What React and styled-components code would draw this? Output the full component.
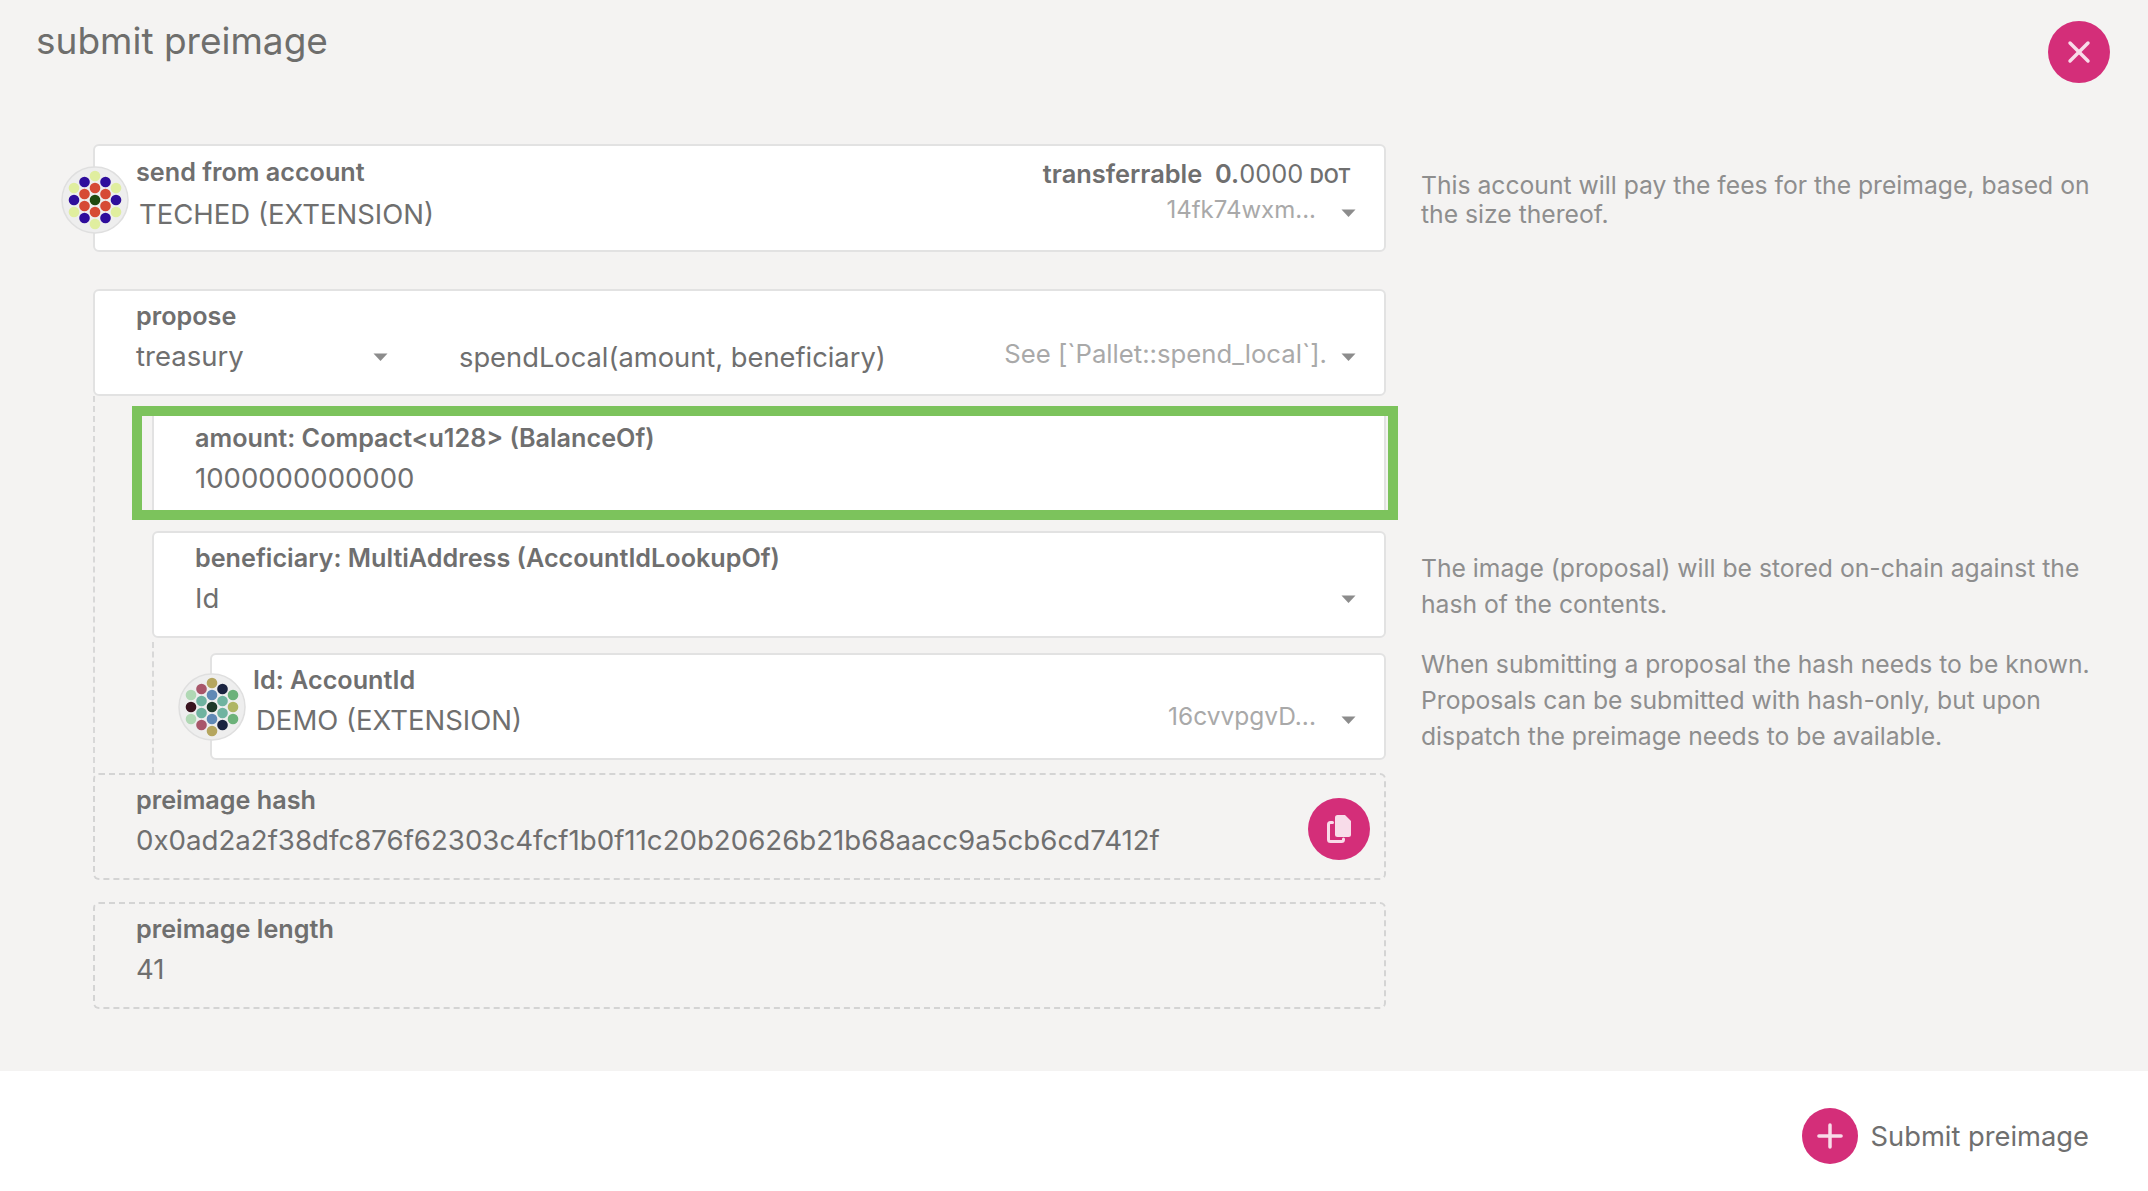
import React from "react";
import styled, { createGlobalStyle } from "styled-components";
import { Plus, X } from "lucide-react";

const GlobalStyle = createGlobalStyle`
  html, body {
    margin: 0;
    padding: 0;
    background: #ffffff;
  }
  body {
    font-family: Inter, "Liberation Sans", sans-serif;
    color: #6f6f6f;
  }
`;

const Y = "#e0ee9f";
const P = "#2f0d9c";
const R = "#d64a35";
const tedColors = [Y, P, P, Y, Y, R, R, R, P, P, "#1f4a10", R, R, R, Y, Y, P, P, Y];
const demoColors = [
  "#b5a65f", "#a8566a", "#1a2340", "#b0d8b4", "#6cb27a", "#6089b5", "#6fb3a0", "#6fb3a0", "#3a1420", "#aeb564",
  "#1f3a2a", "#6fb3a0", "#6fb3a0", "#6089b5", "#b0d8b4", "#6cb27a", "#a8566a", "#1a2340", "#b5a65f",
];
const dots = [
  [0, -24], [-10.5, -18], [10.5, -18], [-21, -12], [21, -12], [0, -12], [-10.5, -6], [10.5, -6], [-21, 0], [21, 0],
  [0, 0], [-10.5, 6], [10.5, 6], [0, 12], [-21, 12], [21, 12], [-10.5, 18], [10.5, 18], [0, 24],
];

const Identicon = ({ colors, drop }) => (
  <AvatarWrap $drop={drop}>
    <svg width="68" height="68" viewBox="-34 -34 68 68">
      <circle r="33" fill="#eeeeee" stroke="#dfdfdf" strokeWidth="1.5" />
      {dots.map(([x, y], i) => (
        <circle key={i} cx={x} cy={y} r="5.3" fill={colors[i]} />
      ))}
    </svg>
  </AvatarWrap>
);

const Caret = () => (
  <CaretIcon width="15" height="8" viewBox="0 0 15 8">
    <path d="M0.5 0.5h14L7.5 8z" fill="#8c8c8c" />
  </CaretIcon>
);

const CopyIcon = () => (
  <svg width="24" height="28" viewBox="0 0 24 28" fill="none">
    <path
      d="M10.5 0H18l6 6v13.5a2.5 2.5 0 0 1-2.5 2.5h-11A2.5 2.5 0 0 1 8 19.5v-17A2.5 2.5 0 0 1 10.5 0z"
      fill="currentColor"
    />
    <path
      d="M5.5 7.5H3.5a2 2 0 0 0-2 2v15a2 2 0 0 0 2 2h11a2 2 0 0 0 2-2v-.5"
      stroke="currentColor"
      strokeWidth="3"
      strokeLinecap="round"
    />
  </svg>
);

const App = () => {
  return (
    <Page>
      <GlobalStyle />
      <Body>
        <Header>
          <Title>submit preimage</Title>
          <RoundButton $size={62}>
            <X size={36} strokeWidth={2.3} />
          </RoundButton>
        </Header>

        <Section>
          <Card $height={108} $pad={8}>
            <Identicon colors={tedColors} drop={2} />
            <CardMain>
              <Label>send from account</Label>
              <AccountName $shift={2}>TECHED (EXTENSION)</AccountName>
            </CardMain>
            <CardSide>
              <Balance>
                transferrable&nbsp; 0.<Light>0000</Light> <Unit>DOT</Unit>
              </Balance>
              <SideRow $offset={-9}>
                <Muted $size={24}>14fk74wxm...</Muted>
                <Caret />
              </SideRow>
            </CardSide>
          </Card>
          <Help>
            <p>This account will pay the fees for the preimage, based on the size thereof.</p>
          </Help>
        </Section>

        <Section $gap={36}>
          <Stack>
            <Card>
              <PalletCol>
                <Label>propose</Label>
                <PalletRow>
                  <Value>treasury</Value>
                  <Caret />
                </PalletRow>
              </PalletCol>
              <MethodRow>
                <Value $size={27.3}>spendLocal(amount, beneficiary)</Value>
                <SideRow $offset={-7} $gap={14}>
                  <Muted $size={25.7}>See [`Pallet::spend_local`].</Muted>
                  <Caret />
                </SideRow>
              </MethodRow>
            </Card>

            <Params>
              <Highlight>
                <Card $height={94} $pad={4} $flat>
                  <CardMain>
                    <Label>amount: Compact&lt;u128&gt; (BalanceOf)</Label>
                    <Value>1000000000000</Value>
                  </CardMain>
                </Card>
              </Highlight>
              <Card>
                <CardMain>
                  <Label>beneficiary: MultiAddress (AccountIdLookupOf)</Label>
                  <Value>Id</Value>
                </CardMain>
                <CaretCol>
                  <Caret />
                </CaretCol>
              </Card>
              <SubParams>
                <Card>
                  <Identicon colors={demoColors} />
                  <CardMain>
                    <Label>Id: AccountId</Label>
                    <AccountName>DEMO (EXTENSION)</AccountName>
                  </CardMain>
                  <CardSide>
                    <SideRow $offset={32}>
                      <Muted>16cvvpgvD...</Muted>
                      <Caret />
                    </SideRow>
                  </CardSide>
                </Card>
              </SubParams>
            </Params>

            <Card $dashed>
              <CardMain>
                <Label>preimage hash</Label>
                <Value $size={27.65}>0x0ad2a2f38dfc876f62303c4fcf1b0f11c20b20626b21b68aacc9a5cb6cd7412f</Value>
              </CardMain>
              <CopyArea>
                <RoundButton $size={62}>
                  <CopyIcon />
                </RoundButton>
              </CopyArea>
            </Card>
            <Card $dashed $top={22}>
              <CardMain>
                <Label>preimage length</Label>
                <Value>41</Value>
              </CardMain>
            </Card>
          </Stack>
          <Help $top={261}>
            <p>The image (proposal) will be stored on-chain against the hash of the contents.</p>
            <p>
              When submitting a proposal the hash needs to be known. Proposals can be submitted with
              hash-only, but upon dispatch the preimage needs to be available.
            </p>
          </Help>
        </Section>
      </Body>
      <Footer>
        <SubmitButton>
          <RoundButton $size={56}>
            <Plus size={38} strokeWidth={2.2} />
          </RoundButton>
          Submit preimage
        </SubmitButton>
      </Footer>
    </Page>
  );
};

export default App;

const Page = styled.div`
  display: flex;
  flex-direction: column;
  height: 1191px;
  overflow: hidden;
`;

const Body = styled.main`
  height: 1071px;
  box-sizing: border-box;
  background: #f4f3f2;
  padding-right: 38px;
`;

const Header = styled.header`
  display: flex;
  justify-content: space-between;
  align-items: flex-start;
  height: 144px;
  padding: 21px 0 0 36px;
  box-sizing: border-box;
`;

const Title = styled.h1`
  margin: 0;
  font-size: 37px;
  line-height: 40px;
  font-weight: 400;
  color: #6e6e6c;
`;

const RoundButton = styled.span`
  flex: none;
  display: inline-flex;
  align-items: center;
  justify-content: center;
  width: ${props => props.$size}px;
  height: ${props => props.$size}px;
  border-radius: 50%;
  background: #d42e79;
  color: #f8dce9;
`;

const Section = styled.section`
  display: grid;
  grid-template-columns: 1293px 1fr;
  column-gap: 35px;
  margin-top: ${props => props.$gap || 0}px;
  padding-left: 93px;
`;

const Stack = styled.div`
  display: flex;
  flex-direction: column;
  min-width: 0;
`;

const Card = styled.div`
  position: relative;
  display: flex;
  box-sizing: border-box;
  height: ${props => props.$height || 107}px;
  margin-top: ${props => props.$top || 0}px;
  padding: ${props => props.$pad || 7}px 28px 0 41px;
  background: ${props => (props.$dashed ? "transparent" : "#ffffff")};
  border: 2px ${props => (props.$dashed ? "dashed #d4d4d4" : "solid #e2e2e2")};
  border-radius: ${props => (props.$flat ? 0 : 6)}px;
  ${props => props.$flat && "border-top: none; border-bottom: none;"}
`;

const AvatarWrap = styled.div`
  position: absolute;
  left: -34px;
  top: calc(50% + ${props => props.$drop || 0}px);
  display: flex;
  transform: translateY(-50%);
`;

const CardMain = styled.div`
  flex: 1;
  min-width: 0;
`;

const CardSide = styled.div`
  display: flex;
  flex-direction: column;
  align-items: flex-end;
`;

const Label = styled.div`
  font-size: 25.2px;
  line-height: 37px;
  font-weight: 600;
  color: #6f6f6f;
  white-space: nowrap;
`;

const Value = styled.div`
  font-size: ${props => props.$size || 27.5}px;
  line-height: 43px;
  color: #6f6f6f;
  white-space: nowrap;
`;

const AccountName = styled(Value)`
  padding-left: 3px;
  margin-top: ${props => props.$shift || 0}px;
`;

const Balance = styled.div`
  font-size: 25.4px;
  line-height: 39px;
  font-weight: 600;
  padding-right: 5px;
  white-space: nowrap;
`;

const Light = styled.span`
  font-weight: 400;
`;

const Unit = styled.span`
  font-size: 19.5px;
  font-weight: 600;
`;

const CaretIcon = styled.svg`
  flex: none;
`;

const SideRow = styled.div`
  display: flex;
  align-items: center;
  gap: ${props => props.$gap || 25}px;
  margin-top: ${props => props.$offset || 0}px;
  height: 44px;
  ${CaretIcon} {
    margin-top: 7px;
  }
`;

const Muted = styled.span`
  font-size: ${props => props.$size || 24.5}px;
  color: #a9a9a9;
  white-space: nowrap;
`;

const CaretCol = styled.div`
  display: flex;
  align-items: center;
  height: 44px;
  margin-top: 37px;
`;

const PalletCol = styled.div`
  flex: none;
  width: 252px;
`;

const PalletRow = styled.div`
  display: flex;
  justify-content: space-between;
  align-items: center;
`;

const MethodRow = styled.div`
  flex: 1;
  display: flex;
  justify-content: space-between;
  align-items: center;
  height: 44px;
  margin: 37px 0 0 71px;
`;

const Params = styled.div`
  display: flex;
  flex-direction: column;
  padding-left: 57px;
  border-left: 2px dashed #d8d8d8;
`;

const Highlight = styled.div`
  margin: 10px -12px 11px -20px;
  padding: 0 2px 0 10px;
  border: 10px solid #7cc35c;
`;

const SubParams = styled.div`
  margin-top: 4px;
  padding: 11px 0 13px 56px;
  border-left: 2px dashed #d8d8d8;
`;

const CopyArea = styled.div`
  display: flex;
  align-items: center;
  margin: -3px -14px 0 0;
`;

const Help = styled.aside`
  padding-top: ${props => props.$top || 27}px;
  font-size: 24.7px;
  line-height: ${props => (props.$top ? 36 : 29)}px;
  color: #8e8e8e;
  p {
    margin: 0 0 24px;
  }
`;

const Footer = styled.footer`
  flex: 1;
  display: flex;
  justify-content: flex-end;
  align-items: center;
  padding: 10px 59px 0 0;
  background: #ffffff;
`;

const SubmitButton = styled.div`
  display: flex;
  align-items: center;
  gap: 13px;
  font-size: 27.3px;
  color: #6f6f6f;
`;
